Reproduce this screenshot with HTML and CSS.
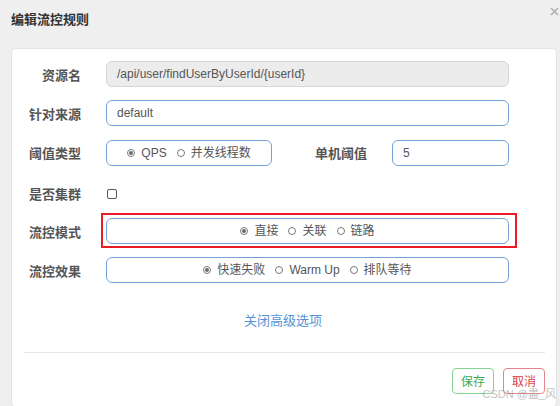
FILE: index.html
```html
<!DOCTYPE html>
<html lang="zh-CN">
<head>
<meta charset="utf-8">
<title>编辑流控规则</title>
<link rel="stylesheet" href="styles.css">
</head>
<body>
<div class="page">
  <div class="header">
    <h1 class="title">编辑流控规则</h1>
    <svg class="close" width="9" height="9" viewBox="0 0 9 9" aria-label="关闭">
      <path d="M1 1 L8 8 M8 1 L1 8" stroke="#b0b0b0" stroke-width="1.6" fill="none"/>
    </svg>
  </div>
  <div class="card">
    <div class="form">
      <div class="row">
        <label class="label">资源名</label>
        <div class="input disabled">/api/user/findUserByUserId/{userId}</div>
      </div>
      <div class="row">
        <label class="label">针对来源</label>
        <div class="input">default</div>
      </div>
      <div class="row">
        <label class="label">阈值类型</label>
        <div class="split">
          <div class="input radios narrow">
            <span class="opt"><span class="radio checked"></span>QPS</span>
            <span class="opt"><span class="radio"></span>并发线程数</span>
          </div>
          <label class="label inline">单机阈值</label>
          <div class="input small">5</div>
        </div>
      </div>
      <div class="row check-row">
        <label class="label">是否集群</label>
        <div class="check-wrap"><span class="checkbox"></span></div>
      </div>
      <div class="row">
        <label class="label">流控模式</label>
        <div class="input radios">
          <span class="opt"><span class="radio checked"></span>直接</span>
          <span class="opt"><span class="radio"></span>关联</span>
          <span class="opt"><span class="radio"></span>链路</span>
          <span class="mark"></span>
        </div>
      </div>
      <div class="row">
        <label class="label">流控效果</label>
        <div class="input radios">
          <span class="opt"><span class="radio checked"></span>快速失败</span>
          <span class="opt"><span class="radio"></span>Warm Up</span>
          <span class="opt"><span class="radio"></span>排队等待</span>
        </div>
      </div>
      <div class="more"><a class="link">关闭高级选项</a></div>
    </div>
    <div class="footer">
      <button class="btn save">保存</button>
      <button class="btn cancel">取消</button>
    </div>
  </div>
  <span class="watermark">CSDN @盡_风</span>
</div>
</body>
</html>
```
FILE: styles.css
```css
* { box-sizing: border-box; }
html, body {
  margin: 0;
  padding: 0;
  background: #efefef;
  font-family: "Liberation Sans", "Noto Sans CJK SC", sans-serif;
  color: #555;
}
.page {
  position: relative;
  width: 560px;
  height: 406px;
  overflow: hidden;
}
.header {
  height: 48px;
  display: flex;
  justify-content: space-between;
  align-items: flex-start;
  padding: 0 1px 0 11px;
}
.title {
  margin: 12px 0 0;
  font-size: 13px;
  line-height: 16px;
  font-weight: bold;
  color: #333;
}
.close {
  display: block;
  margin-top: 7px;
}
.card {
  margin: 0 3px 0 11px;
  background: #fff;
  border: 1px solid #e2e2e2;
  border-radius: 4px;
  padding-bottom: 12px;
}
.form {
  padding: 12px 47px 0 11px;
  display: flex;
  flex-direction: column;
  gap: 13.25px;
}
.row {
  display: grid;
  grid-template-columns: 58px 1fr;
  column-gap: 25px;
  align-items: center;
  height: 26px;
}
.check-row {
  margin-top: 2px;
  margin-bottom: -2px;
}
.label {
  text-align: right;
  font-size: 13px;
  font-weight: bold;
  color: #555;
  white-space: nowrap;
}
.input {
  position: relative;
  height: 26px;
  border: 1px solid #74a2d6;
  border-radius: 6px;
  padding: 0 10px;
  font-size: 12px;
  line-height: 24px;
  color: #555;
  background: #fff;
}
.input.disabled {
  background: #ececec;
  border-color: #d6d6d6;
}
.split {
  display: flex;
  align-items: center;
}
.narrow { width: 166px; flex: none; }
.label.inline { flex: 1; margin-right: 25px; }
.small { width: 117px; flex: none; }
.radios {
  display: flex;
  justify-content: center;
  align-items: center;
  gap: 10px;
  padding: 0;
}
.opt {
  display: inline-flex;
  align-items: center;
  white-space: nowrap;
}
.radio {
  width: 8px;
  height: 8px;
  border: 1px solid #7a7a7a;
  border-radius: 50%;
  margin-right: 6px;
  position: relative;
  background: #fff;
}
.radio.checked::after {
  content: "";
  position: absolute;
  left: 1px;
  top: 1px;
  width: 4px;
  height: 4px;
  border-radius: 50%;
  background: #6a6a6a;
}
.check-wrap {
  display: flex;
  align-items: center;
  padding-left: 1px;
}
.checkbox {
  width: 10px;
  height: 10px;
  border: 1px solid #555;
  border-radius: 2px;
  background: #fff;
}
.mark {
  position: absolute;
  left: -6px;
  right: -9px;
  top: -6px;
  bottom: -5px;
  border: 2px solid #ec1c24;
  pointer-events: none;
}
.more {
  text-align: center;
  margin: 14px 0 23px;
}
.link {
  font-size: 13px;
  line-height: 16px;
  color: #5592d4;
  padding-left: 34px;
}
.footer {
  margin: 0 11px 0 12px;
  border-top: 1px solid #e6e6e6;
  padding-top: 15px;
  display: flex;
  justify-content: flex-end;
  gap: 9px;
}
.btn {
  width: 42px;
  height: 26px;
  border-radius: 4px;
  background: #fff;
  font-family: inherit;
  font-size: 12px;
  padding: 0;
  cursor: pointer;
}
.btn.save {
  border: 1px solid #86d394;
  color: #3fa94f;
}
.btn.cancel {
  border: 1px solid #e8838b;
  color: #d9404a;
}
.watermark {
  position: absolute;
  right: 4px;
  bottom: 6px;
  font-size: 11px;
  line-height: 12px;
  color: rgba(150, 150, 150, 0.6);
  pointer-events: none;
}
```
